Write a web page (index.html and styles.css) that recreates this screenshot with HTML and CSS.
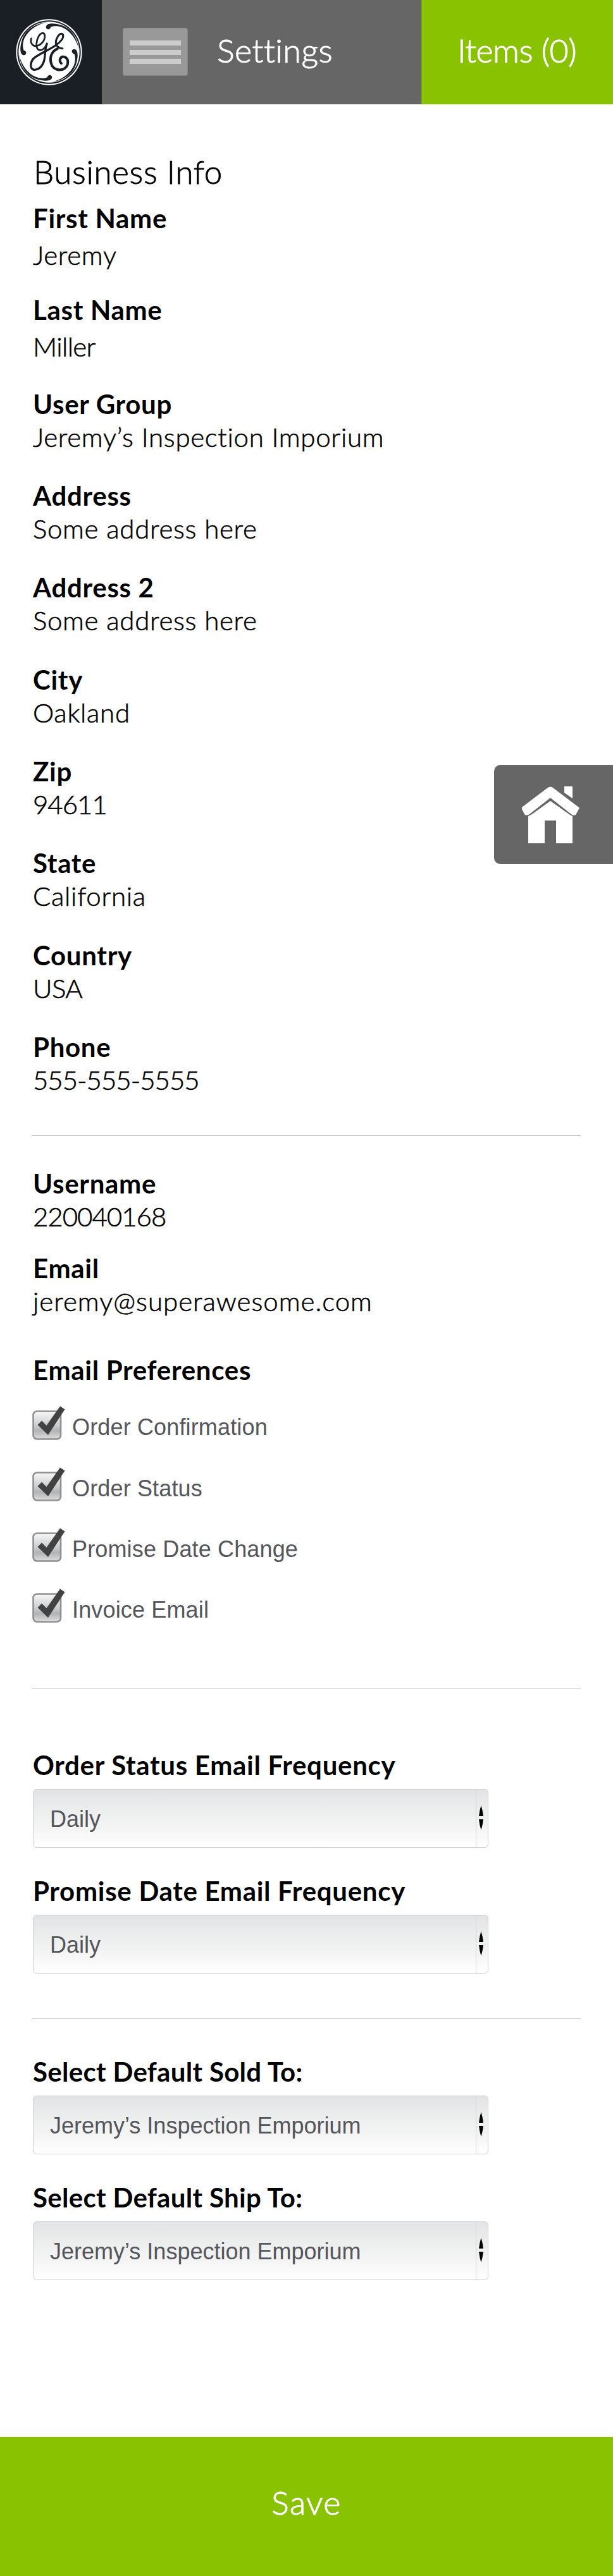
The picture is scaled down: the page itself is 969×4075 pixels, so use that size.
FILE: index.html
```html
<!DOCTYPE html>
<html lang="en">
<head>
<meta charset="utf-8">
<title>Settings</title>
<link rel="stylesheet" href="styles.css">
</head>
<body>
<header class="topbar">
  <a class="brand">
    <svg class="brand-mark" viewBox="75 90 314 314">
      <defs>
        <path id="swirl" d="M218 130C216 110 250 106 292 120C338 136 366 180 374 236C362 186 334 148 296 130C272 120 248 123 240 128C238 142 220 142 218 130Z"/>
      </defs>
      <circle cx="232" cy="247" r="156" fill="#fff"/>
      <circle cx="232" cy="247" r="147" fill="none" stroke="#1a1e25" stroke-width="6"/>
      <g fill="#1a1e25">
        <use href="#swirl"/>
        <use href="#swirl" transform="rotate(90 232 247)"/>
        <use href="#swirl" transform="rotate(180 232 247)"/>
        <use href="#swirl" transform="rotate(270 232 247)"/>
      </g>
      <g fill="none" stroke="#1a1e25" stroke-linecap="round" stroke-linejoin="round">
        <path stroke-width="8" d="M148 182C142 202 154 220 172 218C196 214 214 190 212 168C210 152 194 154 184 170C172 190 168 222 180 234C196 246 216 226 222 206"/>
        <path stroke-width="10" d="M222 208C212 226 216 262 208 290C198 320 178 332 160 330C142 326 142 300 156 280C180 256 232 238 264 214"/>
        <path stroke-width="9" d="M264 214C290 196 302 178 298 164C292 152 276 164 268 184C260 204 264 226 296 230"/>
        <path stroke-width="12" d="M272 231C244 242 234 272 242 300C250 330 284 338 306 324C326 308 326 278 306 270C286 264 276 286 290 300"/>
      </g>
    </svg>
  </a>
  <div class="title-area">
    <button class="menu"><i></i><i></i><i></i></button>
    <h1 class="heading">Settings</h1>
  </div>
  <a class="cart">Items (0)</a>
</header>

<a class="home">
  <svg class="home-icon" viewBox="0 0 92 90">
    <g fill="#fff">
      <path d="M41 2Q45 -1 49 2L91 34L85 45Q82 47 78 44L45 18L12 44Q7 47 4 44L0 36V33Z"/>
      <path d="M67 0H80V19L67 10Z"/>
      <path d="M45 23L76 45L80 47V90H54V54H36V90H10V47L16 44Z"/>
    </g>
  </svg>
</a>

<main class="content">
  <section class="group business">
    <h2 class="section-title">Business Info</h2>
    <div class="field roomy"><h3>First Name</h3><p>Jeremy</p></div>
    <div class="field roomy last"><h3>Last Name</h3><p class="plain">Miller</p></div>
    <div class="field"><h3>User Group</h3><p>Jeremy’s Inspection Imporium</p></div>
    <div class="field"><h3>Address</h3><p>Some address here</p></div>
    <div class="field"><h3>Address 2</h3><p>Some address here</p></div>
    <div class="field"><h3>City</h3><p>Oakland</p></div>
    <div class="field"><h3>Zip</h3><p class="number">94611</p></div>
    <div class="field"><h3>State</h3><p>California</p></div>
    <div class="field"><h3>Country</h3><p class="plain">USA</p></div>
    <div class="field"><h3>Phone</h3><p class="number">555-555-5555</p></div>
  </section>

  <section class="group account">
    <div class="field username"><h3>Username</h3><p class="number">220040168</p></div>
    <div class="field"><h3>Email</h3><p class="email">jeremy@superawesome.com</p></div>
    <h3 class="prefs-title">Email Preferences</h3>
    <ul class="prefs">
      <li><svg class="check" viewBox="0 0 52 54"><use href="#checkbox"/></svg>Order Confirmation</li>
      <li><svg class="check" viewBox="0 0 52 54"><use href="#checkbox"/></svg>Order Status</li>
      <li><svg class="check" viewBox="0 0 52 54"><use href="#checkbox"/></svg>Promise Date Change</li>
      <li><svg class="check" viewBox="0 0 52 54"><use href="#checkbox"/></svg>Invoice Email</li>
    </ul>
  </section>

  <section class="group frequency">
    <h3>Order Status Email Frequency</h3>
    <div class="select"><span>Daily</span><svg class="arrows" viewBox="0 0 18 91"><use href="#updown"/></svg></div>
    <h3>Promise Date Email Frequency</h3>
    <div class="select"><span>Daily</span><svg class="arrows" viewBox="0 0 18 91"><use href="#updown"/></svg></div>
  </section>

  <section class="group defaults">
    <h3>Select Default Sold To:</h3>
    <div class="select"><span>Jeremy’s Inspection Emporium</span><svg class="arrows" viewBox="0 0 18 91"><use href="#updown"/></svg></div>
    <h3>Select Default Ship To:</h3>
    <div class="select"><span>Jeremy’s Inspection Emporium</span><svg class="arrows" viewBox="0 0 18 91"><use href="#updown"/></svg></div>
  </section>
</main>

<button class="save">Save</button>

<svg class="symbols" width="0" height="0">
  <defs>
    <linearGradient id="box-fill" x1="0" y1="0" x2="0" y2="1">
      <stop offset="0" stop-color="#f8f8f8"/>
      <stop offset=".5" stop-color="#cdced0"/>
      <stop offset=".7" stop-color="#b2b3b6"/>
      <stop offset="1" stop-color="#dcddde"/>
    </linearGradient>
    <g id="checkbox">
      <rect x="1.5" y="8.5" width="43.5" height="44" rx="6" fill="url(#box-fill)" stroke="#909090" stroke-width="2.6"/>
      <path d="M8.5 30L15 23.5L22.5 31L44 .5L51.5 5.500L25 46Z" fill="#424242"/>
    </g>
    <g id="updown">
      <path d="M7.500 25Q10 33 11 42H4Q5 33 7.500 25Z"/>
      <path d="M4 47H11Q10 56 7.500 64Q5 56 4 47Z"/>
    </g>
  </defs>
</svg>
</body>
</html>
```
FILE: styles.css
```css
* { box-sizing: border-box; margin: 0; padding: 0; }

body {
  position: relative;
  width: 969px;
  height: 4075px;
  display: flex;
  flex-direction: column;
  background: #fff;
  color: #000;
  font-family: Lato, "Open Sans", sans-serif;
  font-weight: 300;
}

.topbar {
  display: flex;
  flex: none;
  height: 165px;
  color: #fff;
  font-size: 52px;
  line-height: 62px;
}
.brand {
  width: 161px;
  background: #1a1e25;
  padding: 30px 0 0 25px;
}
.brand-mark { display: block; width: 105px; height: 105px; }
.title-area {
  width: 505px;
  background: #666;
  display: flex;
  align-items: flex-start;
  padding-left: 33px;
}
.menu {
  width: 103px;
  height: 76px;
  margin-top: 44px;
  padding: 19px 10px 0 10px;
  border: 1px solid #868686;
  border-radius: 3px;
  background: #999;
  display: flex;
  flex-direction: column;
  gap: 6.500px;
}
.menu i { flex: none; height: 8px; background: #ccc; }
.heading { font-size: 52px; font-weight: 300; letter-spacing: .5px; margin: 48px 0 0 46px; }
.cart {
  flex: 1;
  background: #88c200;
  border-left: 1px solid #7cae07;
  padding: 48px 0 0 56px;
  letter-spacing: -.5px;
}
.heading, .cart, .save { -webkit-text-stroke: 1px #fff; }

.home {
  position: absolute;
  right: 0;
  top: 1210px;
  width: 188px;
  height: 157px;
  border-radius: 10px 0 0 10px;
  background: #666;
  padding: 34px 0 0 44px;
}
.home-icon { display: block; width: 92px; height: 90px; }

.content { flex: none; height: 3690px; padding: 74px 51px 0 50px; }
.group { padding-left: 2px; }

h3 { font-size: 42px; font-weight: 700; line-height: 52px; letter-spacing: .7px; }
.section-title {
  font-size: 51px;
  font-weight: 300;
  line-height: 66px;
  letter-spacing: .7px;
  margin-bottom: 14px;
  padding-left: 1px;
  -webkit-text-stroke: .8px #000;
}

.field { height: 145.3px; }
.field p {
  font-size: 42px;
  line-height: 52px;
  letter-spacing: .7px;
  white-space: nowrap;
  -webkit-text-stroke: .6px #000;
}
.field .plain { letter-spacing: -.6px; }
.field .number { letter-spacing: -1px; }
.field .email { letter-spacing: 1px; }
.roomy p { margin-top: 6px; }
.last { height: 148.5px; }

.business { height: 1558px; border-bottom: 1px solid #bcbcbc; }
.account { height: 874px; padding-top: 49px; border-bottom: 1px solid #bcbcbc; }
.username { height: 134px; }
.prefs-title { margin-top: 16px; }

.prefs { list-style: none; margin-top: 31px; margin-left: -1px; }
.prefs li {
  display: flex;
  height: 96.3px;
  color: #54565b;
  font: 36px/67px "Liberation Sans", Arial, sans-serif;
  letter-spacing: .15px;
}
.check { flex: none; width: 52px; height: 54px; margin-right: 11px; }

.frequency { height: 523px; padding-top: 95px; border-bottom: 1px solid #bcbcbc; }
.defaults { padding-top: 57px; }
.defaults h3 { letter-spacing: .3px; }

.select {
  width: 720px;
  height: 93px;
  margin: 12px 0 42px;
  border: 1.500px solid #cfd1d3;
  border-radius: 6px;
  background: linear-gradient(#e2e3e6, #eceeed 35%, #f4f4f4 65%, #fff);
  display: flex;
  justify-content: space-between;
  color: #54565b;
  font: 36px/94px "Liberation Sans", Arial, sans-serif;
  padding-left: 26px;
}
.arrows { width: 19px; height: 91px; border-left: 1.500px solid #cfd1d3; }

.save {
  height: 220px;
  padding-bottom: 15px;
  border: 0;
  background: #88c200;
  color: #fff;
  font: 300 52px/60px Lato, "Open Sans", sans-serif;
  letter-spacing: 1.500px;
}
.symbols { position: absolute; }
```
